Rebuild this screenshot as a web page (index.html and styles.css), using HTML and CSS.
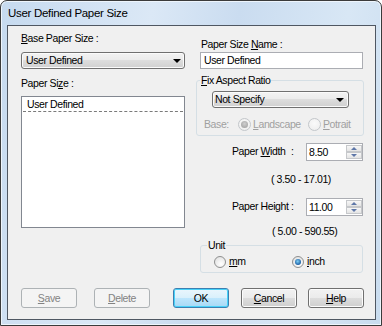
FILE: index.html
```html
<!DOCTYPE html>
<html lang="en">
<head>
  <meta charset="UTF-8">
  <title>User Defined Paper Size</title>
  <link rel="stylesheet" href="styles.css">
</head>
<body>
  <div class="window">
    <div class="titlebar">User Defined Paper Size</div>
    <div class="client">
      <div class="columns">
        <div class="col-left">
          <div class="label"><u>B</u>ase Paper Size :</div>
          <div class="combo combo-base"><span>User Defined</span><i class="arrow"></i></div>
          <div class="label label-list">Paper Si<u>z</u>e :</div>
          <div class="listbox">
            <div class="list-item">User Defined</div>
          </div>
        </div>

        <div class="col-right">
          <div class="label label-name">Paper Size <u>N</u>ame :</div>
          <div class="textbox">User Defined</div>

          <fieldset class="group group-ratio">
            <legend><u>F</u>ix Aspect Ratio</legend>
            <div class="combo combo-ratio"><span>Not Specify</span><i class="arrow"></i></div>
            <div class="base-row disabled">
              <span class="base-label">Base:</span>
              <span class="option option-landscape"><i class="radio checked"></i><u>L</u>andscape</span>
              <span class="option"><i class="radio"></i><u>P</u>otrait</span>
            </div>
          </fieldset>

          <div class="field-row field-width">
            <div class="field-label"><span class="field-name">Paper <u>W</u>idth</span>:</div>
            <div class="spin"><span class="spin-value">8.50</span><span class="spin-btns"><i class="up"></i><i class="down"></i></span></div>
          </div>
          <div class="range range-width">( 3.50 - 17.01)</div>

          <div class="field-row field-height">
            <div class="field-label"><span class="field-name">Paper Hei<u>g</u>ht</span>:</div>
            <div class="spin"><span class="spin-value">11.00</span><span class="spin-btns"><i class="up"></i><i class="down"></i></span></div>
          </div>
          <div class="range range-height">( 5.00 - 590.55)</div>

          <fieldset class="group group-unit">
            <legend>Unit</legend>
            <div class="unit-row">
              <span class="option option-mm"><i class="radio enabled"></i><u>m</u>m</span>
              <span class="option"><i class="radio enabled checked"></i><u>i</u>nch</span>
            </div>
          </fieldset>
        </div>
      </div>

      <div class="buttons">
        <button class="btn btn-disabled"><u>S</u>ave</button>
        <button class="btn btn-disabled btn-delete"><u>D</u>elete</button>
        <button class="btn btn-default btn-ok">OK</button>
        <button class="btn btn-cancel"><u>C</u>ancel</button>
        <button class="btn btn-help"><u>H</u>elp</button>
      </div>
    </div>
  </div>
</body>
</html>
```

FILE: styles.css
```css
* {
  box-sizing: border-box;
}
body {
  margin: 0;
  font-family: 'Liberation Sans', Arial, sans-serif;
  font-size: 10.5px;
  letter-spacing: -0.4px;
  color: #000;
  background: #fff;
}
u {
  text-decoration: underline;
  text-underline-offset: 1px;
}
.window {
  width: 382px;
  height: 326px;
  padding: 0 5px 5px 6px;
  border: 1px solid #3b3b3b;
  border-radius: 7px 7px 0 0;
  background: linear-gradient(100deg, #c6daef 0%, #dbe8f6 35%, #cadcf0 55%, #d8e7f5 80%, #c9dcef 100%);
  box-shadow: inset 0 0 0 1px #eef5fc;
  display: flex;
  flex-direction: column;
}
.titlebar {
  height: 24px;
  padding: 5px 0 0 1px;
  font-size: 11.5px;
  letter-spacing: -0.3px;
  line-height: 14px;
}
.client {
  width: 369px;
  height: 295px;
  border: 1px solid #4f5762;
  background: #f0f0f0;
  padding: 6px 0 11px 13px;
  display: flex;
  flex-direction: column;
}
.columns {
  display: flex;
}
.col-left {
  width: 164px;
}
.col-right {
  width: 168px;
  margin-left: 11px;
  padding-top: 6px;
}
.label {
  line-height: 13px;
  height: 13px;
  white-space: nowrap;
}
.label-list {
  margin-top: 8px;
}
.label-name {
  margin-left: 5px;
}

/* combo boxes */
.combo {
  height: 17px;
  border: 1px solid #707070;
  border-radius: 3px;
  background: linear-gradient(#f3f3f3, #ebebeb 50%, #dddddd 50%, #d0d0d0);
  box-shadow: inset 0 0 0 1px #fbfbfb;
  display: flex;
  align-items: center;
  line-height: 15px;
}
.combo span {
  flex: 1;
}
.combo-base {
  margin-top: 7px;
  padding-left: 4px;
}
.combo-ratio {
  width: 137px;
  margin: 4px 0 0 15px;
  padding-left: 2px;
}
.arrow {
  width: 0;
  height: 0;
  border-left: 4px solid transparent;
  border-right: 4px solid transparent;
  border-top: 4px solid #000;
  margin-right: 3px;
}
.combo-ratio .arrow {
  margin-right: 4px;
}

/* list and text boxes */
.listbox {
  height: 132px;
  margin-top: 6px;
  border: 1px solid #828790;
  background: #fff;
}
.list-item {
  margin: 0 1px;
  padding: 1px 0 0 4px;
  line-height: 13px;
  border-bottom: 1px dashed #7a7a7a;
}
.textbox {
  width: 163px;
  height: 17px;
  margin: 1px 0 0 4px;
  padding-left: 3px;
  border: 1px solid #abadb3;
  background: #fff;
  line-height: 15px;
}

/* group boxes */
.group {
  margin: 5px 0 0;
  padding: 0;
  border: 1px solid #d5dfe5;
  border-radius: 3px;
  min-width: 0;
}
.group legend {
  padding: 0 1px;
  margin-left: 3px;
  line-height: 13px;
}
.group-ratio {
  padding-bottom: 4px;
}
.base-row {
  display: flex;
  align-items: center;
  height: 13px;
  margin-top: 10px;
  padding-left: 7px;
  line-height: 13px;
}
.disabled {
  color: #a0a0a0;
}
.base-label {
  width: 34px;
}
.option {
  display: flex;
  align-items: center;
}
.option-landscape {
  width: 70px;
}
.radio {
  width: 13px;
  height: 13px;
  margin-right: 2px;
  border: 1px solid #c3c7cb;
  border-radius: 50%;
  background: radial-gradient(circle at 50% 40%, #fafafa, #ececec);
  position: relative;
}
.radio.enabled {
  width: 12px;
  height: 12px;
  margin-right: 3px;
  border-color: #8e8f8f;
  background: radial-gradient(circle at 60% 70%, #ffffff, #dcdcdc);
}
.radio.checked::after {
  content: '';
  position: absolute;
  left: 2px;
  top: 2px;
  width: 7px;
  height: 7px;
  border-radius: 50%;
  background: radial-gradient(circle at 50% 40%, #cfcfcf, #9a9a9a);
}
.radio.enabled.checked::after {
  left: 2px;
  top: 2px;
  width: 6px;
  height: 6px;
  background: radial-gradient(circle at 45% 40%, #7fd0f5, #1b5ea5 70%, #2f6fb0);
}

/* spin edits */
.field-row {
  display: flex;
  height: 18px;
}
.field-width {
  margin-top: 7px;
}
.field-height {
  margin-top: 12px;
}
.field-label {
  width: 110px;
  padding: 2px 0 0 36px;
  line-height: 13px;
  white-space: nowrap;
}
.field-name {
  display: inline-block;
  width: 59px;
}
.spin {
  width: 57px;
  height: 18px;
  border: 1px solid #abadb3;
  background: #fff;
  display: flex;
}
.spin-value {
  flex: 1;
  padding-left: 2px;
  line-height: 16px;
}
.spin-btns {
  width: 16px;
  display: flex;
  flex-direction: column;
  padding: 1px 0 1px 0;
}
.spin-btns i {
  flex: 1;
  border: 1px solid #c6c8cb;
  background: linear-gradient(#f7f7f7, #e4e4e4);
  display: flex;
  align-items: center;
  justify-content: center;
}
.spin-btns .up::before {
  content: '';
  border-left: 3px solid transparent;
  border-right: 3px solid transparent;
  border-bottom: 3px solid #5e77a8;
}
.spin-btns .down::before {
  content: '';
  border-left: 3px solid transparent;
  border-right: 3px solid transparent;
  border-top: 3px solid #5e77a8;
}
.range {
  line-height: 13px;
  margin-left: 75px;
}
.range-width {
  margin-top: 12px;
}
.range-height {
  margin-top: 9px;
  margin-left: 76px;
}
.group-unit {
  width: 163px;
  margin: 1px 0 0 4px;
  padding: 3px 0 4px 13px;
}
.group-unit legend {
  margin-left: -7px;
}
.unit-row {
  display: flex;
  height: 13px;
  align-items: center;
  line-height: 13px;
}
.option-mm {
  width: 78px;
}

/* buttons */
.buttons {
  display: flex;
  margin-top: auto;
}
.btn {
  width: 56px;
  height: 20px;
  padding: 0;
  font: inherit;
  letter-spacing: inherit;
  line-height: 18px;
  border: 1px solid #707070;
  border-radius: 3px;
  background: linear-gradient(#f2f2f2, #ebebeb 50%, #dddddd 50%, #cfcfcf);
  box-shadow: inset 0 0 0 1px #fcfcfc;
  color: #000;
}
.btn-disabled {
  border-color: #adb2b5;
  background: #f4f4f4;
  box-shadow: none;
  color: #838383;
}
.btn-default {
  border-color: #3c7fb1;
  background: linear-gradient(#eaf6fd, #d9f0fc 50%, #bee6fd 50%, #a7d9f5);
  box-shadow: inset 0 0 0 1px #48d2f9;
}
.btn-delete {
  margin-left: 17px;
}
.btn-ok {
  margin-left: 23px;
}
.btn-cancel {
  margin-left: 12px;
}
.btn-help {
  margin-left: 11px;
}
```
